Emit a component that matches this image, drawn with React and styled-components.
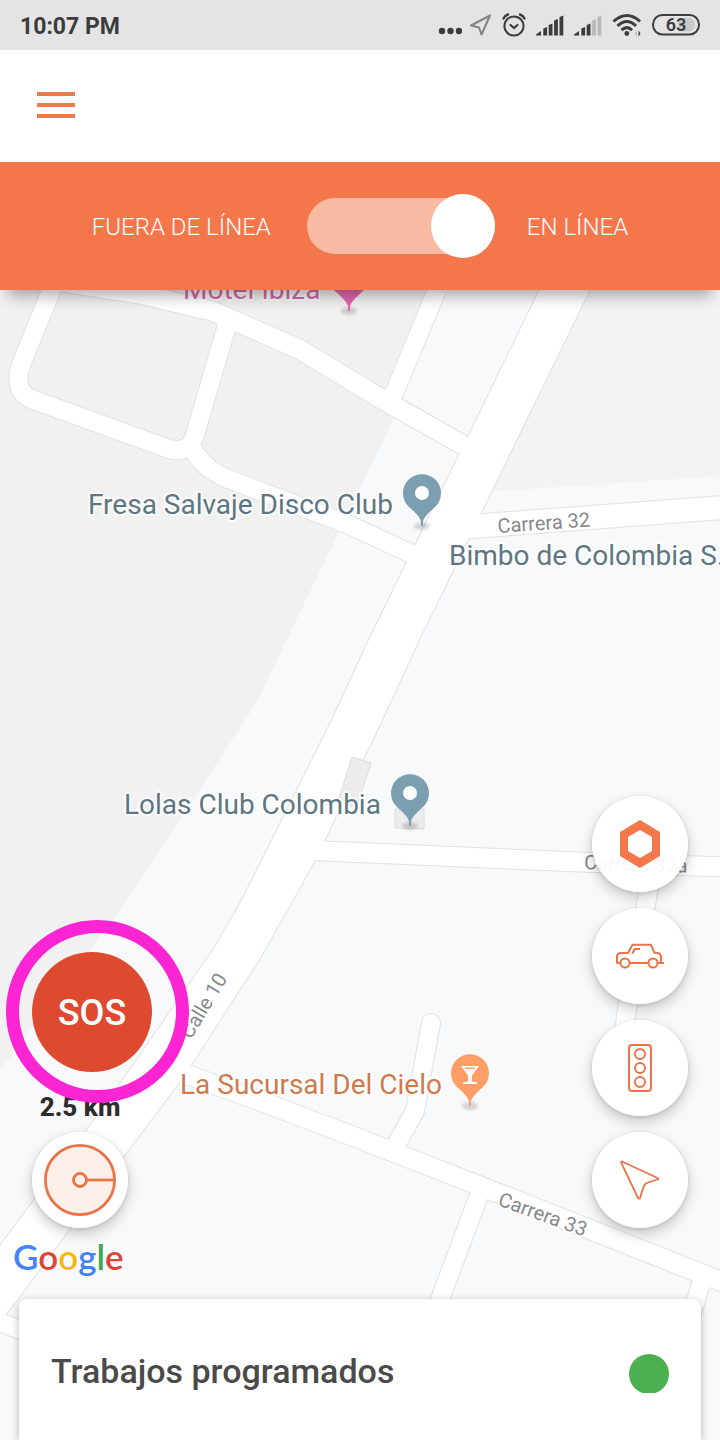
import React from 'react';
import styled, { createGlobalStyle } from 'styled-components';

const GlobalStyle = createGlobalStyle`
  body {
    margin: 0;
    color: #3c3c3c;
    font-family: Roboto, "Noto Sans", sans-serif;
    background-color: #f8f9fb;
  }

  button {
    padding: 0;
    font-family: inherit;
    border: none;
    cursor: pointer;
  }

  svg {
    display: block;
  }
`

const Screen = styled.div`
  display: flex;
  flex-direction: column;
  min-height: 100vh;
`

const StatusBar = styled.div`
  display: flex;
  justify-content: space-between;
  align-items: center;
  height: 50px;
  padding: 0 20px;
  background-color: #e4e4e4;
`

const Clock = styled.time`
  padding-top: 2px;
  font-size: 23px;
  font-weight: bold;
`

const StatusIcons = styled.div`
  display: flex;
  align-items: center;
  gap: 10px;
`

const Header = styled.header`
  display: flex;
  align-items: center;
  height: 110px;
  padding: 0 37px 2px;
  background-color: #fff;
`

const MenuButton = styled.button`
  background: none;
`

const OnlineBar = styled.div`
  position: relative;
  z-index: 2;
  display: flex;
  justify-content: center;
  align-items: center;
  gap: 32px;
  height: 128px;
  color: #fff;
  font-size: 24px;
  font-weight: 300;
  line-height: 28px;
  background-color: #f4774b;
  box-shadow: 0 14px 14px -8px rgba(0, 0, 0, 0.32);

  > span,
  > label {
    padding-top: 2px;
  }

  > span {
    padding-right: 4px;
  }
`

const Switch = styled.input`
  display: flex;
  align-items: center;
  width: 188px;
  height: 56px;
  margin: 0;
  border-radius: 28px;
  background-color: #f9baa4;
  appearance: none;
  cursor: pointer;

  &::before {
    content: '';
    width: 64px;
    height: 64px;
    flex-shrink: 0;
    border-radius: 50%;
    background-color: #fff;
  }

  &:checked::before {
    margin-left: auto;
  }
`

const MapArea = styled.main`
  position: relative;
  display: flex;
  flex-direction: column;
  flex: 1;
  justify-content: flex-end;
  overflow: hidden;
`

const MapCanvas = styled.svg`
  position: absolute;
  top: 0;
  left: 0;
  width: 100%;
  height: 100%;
`

const PlaceName = styled.text`
  fill: ${(props) => props.$color};
  stroke: #fff;
  stroke-width: 4px;
  stroke-linejoin: round;
  stroke-opacity: 0.8;
  paint-order: stroke;
  font-size: 28px;
`

const StreetName = styled.text`
  fill: #85898c;
  stroke: #fff;
  stroke-width: 4px;
  stroke-linejoin: round;
  paint-order: stroke;
  font-size: 20px;
`

const Controls = styled.div`
  position: relative;
  display: flex;
  justify-content: space-between;
  align-items: flex-end;
  padding: 0 32px;
`

const LeftControls = styled.div`
  display: flex;
  flex-direction: column;
  align-items: flex-start;
`

const RightControls = styled.div`
  display: flex;
  flex-direction: column;
  gap: 16px;
`

const RoundButton = styled.button`
  display: flex;
  justify-content: center;
  align-items: center;
  width: 96px;
  height: 96px;
  border-radius: 50%;
  background-color: rgba(255, 255, 255, 0.94);
  box-shadow: 0 6px 14px rgba(0, 0, 0, 0.2), 0 1px 4px rgba(0, 0, 0, 0.12);
`

const SosButton = styled.button`
  position: relative;
  z-index: 1;
  width: 120px;
  height: 120px;
  padding-top: 2px;
  color: #fff;
  font-size: 36px;
  font-weight: 500;
  border-radius: 50%;
  background-color: #de4a2f;

  &::after {
    content: '';
    position: absolute;
    top: -32px;
    left: -26px;
    width: 157px;
    height: 157px;
    border: 13px solid #fc25d4;
    border-radius: 50%;
  }
`

const Distance = styled.div`
  width: 96px;
  margin: 21px 0 11px;
  color: #2c2c2c;
  font-size: 26px;
  font-weight: 800;
  line-height: 28px;
  text-align: center;
`

const Attribution = styled.a`
  position: relative;
  align-self: flex-start;
  margin: 6px 0 21px 13px;
  font-family: Lato, sans-serif;
  font-size: 35px;
  font-weight: 600;
  line-height: 44px;
  text-decoration: none;
  text-shadow: 0 0 2px #fff, 0 0 3px #fff, 0 0 4px #fff;
`

const Letter = styled.span`
  color: ${(props) => props.$color};
`

const JobsCard = styled.section`
  position: relative;
  display: flex;
  justify-content: space-between;
  align-items: flex-end;
  margin: 0 19px;
  padding: 53px 32px 47px;
  border-radius: 8px 8px 0 0;
  background-color: #fff;
  box-shadow: 0 2px 8px rgba(0, 0, 0, 0.28);
`

const JobsTitle = styled.h2`
  margin: 0;
  padding-bottom: 2px;
  color: #4a4a4a;
  font-size: 34px;
  font-weight: 500;
  line-height: 39px;
`

const roads = [
  { width: 18, d: 'M53 286 L22 362 C16 378 16 391 31 399 L169 449 Q187 454 194 438 L228 322' },
  { width: 19, d: 'M30 277 L140 294 L212 311 L299 349 L380 398 L470 449' },
  { width: 18, d: 'M437 290 L393 396' },
  { width: 18, d: 'M192 448 Q202 468 228 479 L347 524 L412 554' },
  { width: 23, d: 'M465 527 L730 507' },
  { width: 19, d: 'M300 850 L580 862 L730 867' },
  { width: 18, d: 'M653 865 L627 1010 L620 1060' },
  { width: 19, d: 'M180 1072 L260 1101 L360 1139 L480 1186 L730 1285' },
  { width: 18, d: 'M431 1023 L415 1111 L396 1145', cap: 'round' },
  { width: 18, d: 'M481 1190 L436 1310' },
  { width: 18, d: 'M702 1280 L684 1340' },
  { width: 18, d: 'M-10 1318 L40 1338' },
]

const mainRoad = 'M542 285 L369 640 L332 720 L242 900 L215 947 L118 1087 L86 1131 L-10 1259 L-10 1335 L17 1300 L123 1157 L184 1076 L260 958 L290 905 L315 860 L382 720 L419 640 L592 285 Z'

const pins = [
  { x: 349, y: 278, color: '#e267ae' },
  { x: 422, y: 493, color: '#7b9eb0' },
  { x: 410, y: 793, color: '#7b9eb0' },
  { x: 470, y: 1073, color: '#ff9e67', bar: true },
]

const places = [
  { x: 183, y: 299, color: '#d268a8', name: 'Motel Ibiza' },
  { x: 88, y: 514, color: '#5d7681', name: 'Fresa Salvaje Disco Club' },
  { x: 449, y: 565, color: '#5d7681', name: 'Bimbo de Colombia S.' },
  { x: 124, y: 814, color: '#5d7681', name: 'Lolas Club Colombia' },
  { x: 180, y: 1094, color: '#ce7a4d', name: 'La Sucursal Del Cielo' },
]

const streets = [
  { x: 498, y: 533, angle: -4, name: 'Carrera 32' },
  { x: 584, y: 869, angle: 2, name: 'Carrera 32a' },
  { x: 191, y: 1040, angle: -59, name: 'Calle 10' },
  { x: 497, y: 1205, angle: 20, name: 'Carrera 33' },
]

const Pin = ({ x, y, color, bar }) => (
  <g transform={`translate(${x} ${y})`}>
    <ellipse cx="0" cy="33" rx="8" ry="4" fill="#000" opacity="0.15" filter="url(#soft)" />
    <path d="M0 33 C-1 25 -4 22 -13 14 A19 19 0 1 1 13 14 C4 22 1 25 0 33 Z" fill={color} />
    <path d="M-1 26 H1 V33 H-1 Z" fill={color} />
    {bar ? (
      <path d="M-9 -7 H9 L2 2.500 V8.500 L7 9.500 V11 H-7 V9.500 L-2 8.500 V2.500 Z M-5.500 -5.500 L-4.500 -4 H4.500 L5.500 -5.500 Z" fill="#fff" fillRule="evenodd" />
    ) : (
      <circle r="7" fill="#fff" />
    )}
  </g>
)

const CityMap = () => (
  <MapCanvas viewBox="0 290 720 1150" preserveAspectRatio="xMidYMin slice" role="img" aria-label="Mapa">
    <defs>
      <filter id="soft" x="-50%" y="-50%" width="200%" height="200%">
        <feGaussianBlur stdDeviation="1.500" />
      </filter>
    </defs>
    <rect x="0" y="290" width="720" height="1150" fill="#f8f9fb" />
    <path d="M0 290 H437 L393 420 L338 534 L255 705 L127 900 L0 1071 Z" fill="#f1f1f1" />
    <path d="M566 290 H720 V476 L470 493 Z" fill="#f1f3f4" />
    <g fill="none" stroke="#e0e1e2">
      {roads.map((road) => (
        <path key={road.d} d={road.d} strokeWidth={road.width + 2} strokeLinecap={road.cap} />
      ))}
      <path d={mainRoad} strokeWidth="2" />
    </g>
    <g fill="none" stroke="#fff">
      {roads.map((road) => (
        <path key={road.d} d={road.d} strokeWidth={road.width} strokeLinecap={road.cap} />
      ))}
      <path d={mainRoad} fill="#fff" stroke="none" />
    </g>
    <g fill="#ececec" stroke="#dcdcdc">
      <path d="M352 757 L371 763 L356 808 L338 801 Z" />
      <path d="M395 809 H424 V829 L395 828 Z" />
    </g>
    {streets.map((street) => (
      <StreetName key={street.name} transform={`translate(${street.x} ${street.y}) rotate(${street.angle})`}>
        {street.name}
      </StreetName>
    ))}
    {places.map((place) => (
      <PlaceName key={place.name} x={place.x} y={place.y} $color={place.color}>{place.name}</PlaceName>
    ))}
    {pins.map((pin) => (
      <Pin key={`${pin.x}-${pin.y}`} {...pin} />
    ))}
  </MapCanvas>
)

const Signal = ({ level }) => (
  <svg width="28" height="21" viewBox="0 0 28 21">
    <path d="M0 20.500 V19.500 L5 16 V20.500 Z" fill="#3c3c3c" />
    {[8.5, 12, 16.5, 20].map((height, i) => {
      const x = 7.3 + i * 5.4;
      const top = 20.5 - height;
      return (
        <path
          key={height}
          d={`M${x} 20.500 V${top + 1.5} L${x + 3.8} ${top} V20.500 Z`}
          fill={i < level ? '#3c3c3c' : '#b9b9b9'}
        />
      );
    })}
  </svg>
)

const DeviceStatus = () => (
  <StatusIcons>
    <svg width="24" height="22" viewBox="0 0 24 22" fill="#3c3c3c">
      <circle cx="4" cy="17" r="3.200" />
      <circle cx="12.500" cy="17" r="3.200" />
      <circle cx="21" cy="17" r="3.200" />
    </svg>
    <svg width="20" height="22" viewBox="0 0 20 22" fill="none" stroke="#848484" strokeWidth="2" strokeLinejoin="round" overflow="visible">
      <path d="M18 1.500 L-1 11.500 L7 13.500 L9.500 20.500 Z" />
    </svg>
    <svg width="24" height="24" viewBox="0 0 24 24" fill="none" stroke="#3c3c3c" strokeWidth="2" strokeLinecap="round">
      <circle cx="12" cy="13" r="9.600" />
      <path d="M8.500 12 L12 15 L15.500 12" strokeWidth="2.200" />
      <path d="M1.500 5.500 Q3 2.500 6 1.500 M22.500 5.500 Q21 2.500 18 1.500" strokeWidth="2.400" />
    </svg>
    <Signal level={4} />
    <Signal level={2} />
    <svg width="30" height="24" viewBox="0 0 30 24" fill="none" stroke="#3c3c3c" strokeWidth="3">
      <path d="M1.500 8.500 Q15 -3.500 28 8.500" />
      <path d="M5.500 13 Q15 4 24 13" />
      <path d="M9.500 17.200 Q15 12 20 17.200" />
      <circle cx="14.800" cy="20.500" r="2.400" fill="#3c3c3c" stroke="none" />
      <path d="M26.500 17.500 V24 L28.500 20.500 Z" fill="#3c3c3c" stroke="none" />
      <path d="M25 17.500 V24 L23 20.500 Z" fill="#b9b9b9" stroke="none" />
    </svg>
    <svg width="48" height="22" viewBox="0 0 48 22" role="img" aria-label="63%">
      <rect x="26" y="4" width="17" height="13.500" rx="6.500" fill="#c9c9c9" />
      <rect x="1" y="1" width="46" height="19.500" rx="9.500" fill="none" stroke="#3c3c3c" strokeWidth="2" />
      <text x="24" y="17" textAnchor="middle" fontSize="18" fontWeight="600" fill="#3c3c3c">63</text>
    </svg>
  </StatusIcons>
)

const lineIcon = { width: 48, height: 48, viewBox: '0 0 48 48', fill: 'none', stroke: '#ea7348', strokeWidth: 2, strokeLinejoin: 'round' }

const HexagonIcon = () => (
  <svg width="48" height="48" viewBox="0 0 48 48">
    <path d="M24 0 L44 12 V36 L24 48 L4 36 V12 Z M24 10 L12 17 V31 L24 38 L36 31 V17 Z" fill="#f4774b" fillRule="evenodd" />
  </svg>
)

const CarIcon = () => (
  <svg {...lineIcon}>
    <circle cx="9" cy="31" r="4.500" />
    <circle cx="37" cy="31" r="4.500" />
    <path d="M4.500 31 H1 V25 Q1 21 5 21 H12 L16.500 12.800 H35 L38.500 20.800 Q45 20.500 45 25 V31 M41.500 31 H48 M13.500 31 H32.500" />
    <path d="M16.300 21.500 L18.800 17 H24" />
  </svg>
)

const TrafficIcon = () => (
  <svg {...lineIcon}>
    <rect x="13" y="1" width="22" height="46" rx="3" />
    <circle cx="24" cy="10" r="5" />
    <circle cx="24" cy="24" r="5" />
    <circle cx="24" cy="38" r="5" />
  </svg>
)

const LocateIcon = () => (
  <svg {...lineIcon} strokeWidth="1.800">
    <path d="M6 5.500 L41.500 22 Q43 23 41.500 23.500 L32 26.500 Q28.500 27.500 27.500 31 L24 42 Q23 43.500 22 42 L5.300 6.800 Q4.800 5 6 5.500 Z" />
  </svg>
)

const RadiusIcon = () => (
  <svg width="72" height="72" viewBox="0 0 72 72" fill="none" stroke="#ea7348" strokeWidth="2.800">
    <circle cx="36" cy="36" r="34.600" fill="#fdf0ea" />
    <circle cx="36" cy="36" r="6.500" />
    <path d="M42.500 36 H70" />
  </svg>
)

class App extends React.Component {
  constructor(props) {
    super(props);
    this.state = {
      online: true,
    }
  }

  toggleOnline = () => {
    this.setState({ online: !this.state.online });
  }

  render() {
    return (
      <Screen>
        <GlobalStyle />
        <StatusBar>
          <Clock>10:07 PM</Clock>
          <DeviceStatus />
        </StatusBar>
        <Header>
          <MenuButton aria-label="Menú">
            <svg width="38" height="26" viewBox="0 0 38 26" fill="#ee774c">
              <rect width="38" height="4" />
              <rect y="11" width="38" height="4" />
              <rect y="22" width="38" height="4" />
            </svg>
          </MenuButton>
        </Header>
        <OnlineBar>
          <span>FUERA DE LÍNEA</span>
          <Switch id="online" type="checkbox" role="switch" checked={this.state.online} onChange={this.toggleOnline} />
          <label htmlFor="online">EN LÍNEA</label>
        </OnlineBar>
        <MapArea>
          <CityMap />
          <Controls>
            <LeftControls>
              <SosButton>SOS</SosButton>
              <Distance>2.5 km</Distance>
              <RoundButton aria-label="Radio"><RadiusIcon /></RoundButton>
            </LeftControls>
            <RightControls>
              <RoundButton aria-label="Zonas"><HexagonIcon /></RoundButton>
              <RoundButton aria-label="Vehículos"><CarIcon /></RoundButton>
              <RoundButton aria-label="Tráfico"><TrafficIcon /></RoundButton>
              <RoundButton aria-label="Mi ubicación"><LocateIcon /></RoundButton>
            </RightControls>
          </Controls>
          <Attribution href="#google">
            <Letter $color="#4285f4">G</Letter>
            <Letter $color="#db4437">o</Letter>
            <Letter $color="#f4b912">o</Letter>
            <Letter $color="#4285f4">g</Letter>
            <Letter $color="#3aa757">l</Letter>
            <Letter $color="#db4437">e</Letter>
          </Attribution>
          <JobsCard>
            <JobsTitle>Trabajos programados</JobsTitle>
            <svg width="40" height="39" viewBox="0 0 40 39">
              <circle cx="20" cy="20" r="20" fill="#4caf50" />
            </svg>
          </JobsCard>
        </MapArea>
      </Screen>
    );
  }
}

export default App;
